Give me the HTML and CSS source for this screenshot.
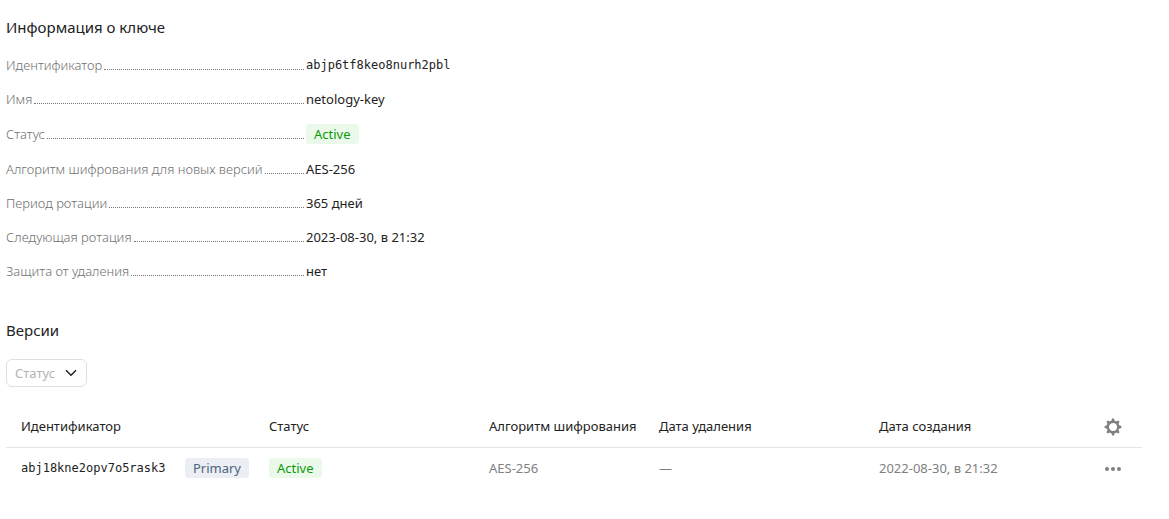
FILE: index.html
```html
<!DOCTYPE html>
<html lang="ru">
<head>
<meta charset="utf-8">
<meta name="viewport" content="width=device-width, initial-scale=1">
<title>Информация о ключе</title>
<link rel="stylesheet" href="styles.css">
</head>
<body>
<main class="page">
  <section class="section">
    <h2 class="title">Информация о ключе</h2>
    <dl class="details">
      <div class="details-row"><dt class="details-term">Идентификатор</dt><dd class="details-value mono">abjp6tf8keo8nurh2pbl</dd></div>
      <div class="details-row"><dt class="details-term">Имя</dt><dd class="details-value">netology-key</dd></div>
      <div class="details-row"><dt class="details-term">Статус</dt><dd class="details-value"><span class="label label-active">Active</span></dd></div>
      <div class="details-row"><dt class="details-term">Алгоритм шифрования для новых версий</dt><dd class="details-value">AES-256</dd></div>
      <div class="details-row"><dt class="details-term">Период ротации</dt><dd class="details-value">365 дней</dd></div>
      <div class="details-row"><dt class="details-term">Следующая ротация</dt><dd class="details-value">2023-08-30, в 21:32</dd></div>
      <div class="details-row"><dt class="details-term">Защита от удаления</dt><dd class="details-value">нет</dd></div>
    </dl>
  </section>

  <section class="section">
    <h2 class="title">Версии</h2>
    <div class="filter">
      <select class="filter-select" aria-label="Статус">
        <option>Статус</option>
      </select>
      <svg class="filter-arrow" viewBox="0 0 12 8" width="12" height="8" aria-hidden="true"><path d="M1 1.2 6 6.2 11 1.2" fill="none" stroke="#222" stroke-width="1.5"/></svg>
    </div>
    <table class="versions">
      <colgroup>
        <col class="col-id"><col class="col-status"><col class="col-algorithm"><col class="col-deleted"><col><col class="col-actions">
      </colgroup>
      <thead>
        <tr>
          <th scope="col">Идентификатор</th>
          <th scope="col">Статус</th>
          <th scope="col">Алгоритм шифрования</th>
          <th scope="col">Дата удаления</th>
          <th scope="col">Дата создания</th>
          <th scope="col">
            <button class="icon-button" type="button" aria-label="Настройки таблицы">
              <svg viewBox="0 0 18 18" width="18" height="18" aria-hidden="true">
                <circle cx="9" cy="9" r="5.2" fill="none" stroke="#808080" stroke-width="2.4"/>
                <g fill="#808080">
                  <path id="tooth" d="M7 4 8.1.6H9.9L11 4Z"/>
                  <use href="#tooth" transform="rotate(45 9 9)"/>
                  <use href="#tooth" transform="rotate(90 9 9)"/>
                  <use href="#tooth" transform="rotate(135 9 9)"/>
                  <use href="#tooth" transform="rotate(180 9 9)"/>
                  <use href="#tooth" transform="rotate(225 9 9)"/>
                  <use href="#tooth" transform="rotate(270 9 9)"/>
                  <use href="#tooth" transform="rotate(315 9 9)"/>
                </g>
              </svg>
            </button>
          </th>
        </tr>
      </thead>
      <tbody>
        <tr>
          <td><div class="version-id"><span class="mono">abj18kne2opv7o5rask3</span><span class="label label-primary">Primary</span></div></td>
          <td><span class="label label-active">Active</span></td>
          <td>AES-256</td>
          <td>—</td>
          <td>2022-08-30, в 21:32</td>
          <td>
            <button class="icon-button" type="button" aria-label="Действия">
              <svg viewBox="0 0 18 18" width="18" height="18" aria-hidden="true"><g fill="#808080"><circle cx="3" cy="9" r="2"/><circle cx="9" cy="9" r="2"/><circle cx="15" cy="9" r="2"/></g></svg>
            </button>
          </td>
        </tr>
      </tbody>
    </table>
  </section>
</main>
</body>
</html>
```
FILE: styles.css
```css
* {
  box-sizing: border-box;
}

body {
  margin: 0;
  background: #fff;
  color: #222;
  font-family: "Noto Sans", sans-serif;
  font-size: 13px;
  line-height: 18px;
}

.page {
  display: flex;
  flex-direction: column;
  gap: 38px;
  padding: 15px 27px 24px 6px;
}

.title {
  margin: 0 0 17px;
  font-size: 15px;
  font-weight: 400;
  line-height: 24px;
}

.details {
  display: flex;
  flex-direction: column;
  gap: 16px;
  margin: 0;
}

.details-row {
  display: flex;
  align-items: center;
  gap: 2px;
}

.details-term {
  display: flex;
  flex: 0 0 298px;
  gap: 2px;
  color: #707070;
  font-weight: 300;
  white-space: nowrap;
}

.details-term::after {
  content: "";
  flex: 1;
  height: 13px;
  border-bottom: 1px dotted #777;
}

.details-value {
  margin: 0;
}

.mono {
  padding-top: 1px;
  color: #222;
  font-family: "DejaVu Sans Mono", monospace;
  font-size: 12px;
  line-height: 17px;
}

.label {
  display: block;
  width: fit-content;
  padding: 0 8px;
  border-radius: 4px;
  line-height: 20px;
}

.label-active {
  background: #ebf9eb;
  color: #0a9a0a;
}

.label-primary {
  background: #ebeff3;
  color: #4d6480;
}

.filter {
  position: relative;
  width: fit-content;
}

.filter-select {
  display: block;
  height: 28px;
  padding: 0 30px 0 8px;
  border: 1px solid #e0e0e0;
  border-radius: 6px;
  appearance: none;
  background: #fff;
  color: #b3b3b3;
  font: inherit;
}

.filter-arrow {
  position: absolute;
  top: 10px;
  right: 10px;
  pointer-events: none;
}

.versions {
  width: 100%;
  margin-top: 19px;
  border-collapse: collapse;
  table-layout: fixed;
}

.col-id {
  width: 253px;
}

.col-status,
.col-deleted {
  width: 220px;
}

.col-algorithm {
  width: 170px;
}

.col-actions {
  width: 58px;
}

.versions th,
.versions td {
  height: 41px;
  padding: 0 10px;
  text-align: left;
  white-space: nowrap;
}

.versions th {
  border-bottom: 1px solid #e5e5e5;
  font-weight: 400;
}

.versions td {
  color: #808080;
}

.versions th:first-child,
.versions td:first-child {
  padding-left: 15px;
}

.versions th:last-child,
.versions td:last-child {
  text-align: center;
}

.version-id {
  display: flex;
  align-items: center;
  justify-content: space-between;
}

.icon-button {
  display: inline-flex;
  padding: 0;
  border: 0;
  background: none;
  vertical-align: middle;
}
```
